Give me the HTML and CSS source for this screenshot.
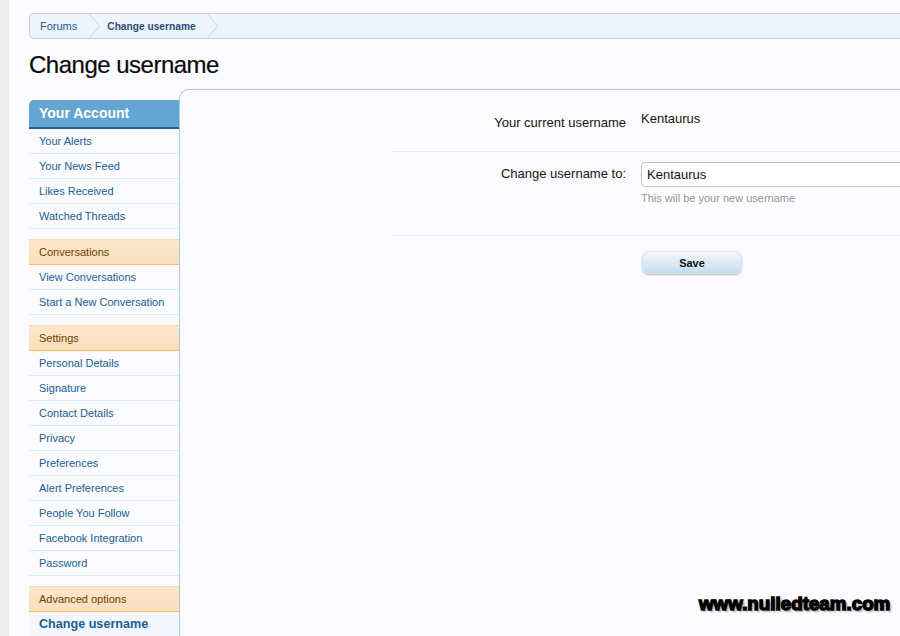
FILE: index.html
```html
<!DOCTYPE html>
<html>
<head>
<meta charset="utf-8">
<title>Change username</title>
<link rel="stylesheet" href="styles.css">
</head>
<body>
<div class="page">
  <nav class="crumbs">
    <a class="crumb" href="#">Forums</a>
    <svg class="chev" width="12" height="26" viewBox="0 0 12 26"><polyline points="0.5,0 11.5,13 0.5,26" fill="none" stroke="#c3d9ec" stroke-width="1"/></svg>
    <a class="crumb current" href="#">Change username</a>
    <svg class="chev" width="12" height="26" viewBox="0 0 12 26"><polyline points="0.5,0 11.5,13 0.5,26" fill="none" stroke="#c3d9ec" stroke-width="1"/></svg>
  </nav>
  <h1 class="title">Change username</h1>
  <div class="layout">
    <aside class="sidebar">
      <div class="side-head">Your Account</div>
      <ul class="side-list">
        <li><a href="#">Your Alerts</a></li>
        <li><a href="#">Your News Feed</a></li>
        <li><a href="#">Likes Received</a></li>
        <li><a href="#">Watched Threads</a></li>
      </ul>
      <div class="side-section">Conversations</div>
      <ul class="side-list">
        <li><a href="#">View Conversations</a></li>
        <li><a href="#">Start a New Conversation</a></li>
      </ul>
      <div class="side-section">Settings</div>
      <ul class="side-list">
        <li><a href="#">Personal Details</a></li>
        <li><a href="#">Signature</a></li>
        <li><a href="#">Contact Details</a></li>
        <li><a href="#">Privacy</a></li>
        <li><a href="#">Preferences</a></li>
        <li><a href="#">Alert Preferences</a></li>
        <li><a href="#">People You Follow</a></li>
        <li><a href="#">Facebook Integration</a></li>
        <li><a href="#">Password</a></li>
      </ul>
      <div class="side-section">Advanced options</div>
      <div class="side-active">Change username</div>
    </aside>
    <main class="panel">
      <form class="form">
        <div class="row row-first">
          <div class="label label-static">Your current username</div>
          <div class="field value">Kentaurus</div>
        </div>
        <div class="row row-second">
          <label class="label label-input">Change username to:</label>
          <div class="field">
            <input class="text-input" type="text" value="Kentaurus">
            <div class="hint">This will be your new username</div>
          </div>
        </div>
        <div class="row row-submit">
          <div class="label"></div>
          <div class="field"><button class="save" type="button">Save</button></div>
        </div>
      </form>
    </main>
  </div>
  <div class="watermark">www.nulledteam.com</div>
</div>
</body>
</html>
```
FILE: styles.css
```css
html, body {
  margin: 0;
  padding: 0;
  overflow: hidden;
}
body {
  background: #efefef;
  font-family: "Liberation Sans", Arial, sans-serif;
  width: 900px;
  height: 636px;
}
a { text-decoration: none; }
.page {
  margin-left: 9px;
  height: 636px;
  background: #fbfbfe;
  padding: 13px 0 0 20px;
  box-sizing: border-box;
  position: relative;
}
.crumbs {
  display: flex;
  align-items: center;
  height: 24px;
  width: 1000px;
  border: 1px solid #b9d3ea;
  border-radius: 5px 0 0 5px;
  background: linear-gradient(#f1f6fc, #eaf2fa);
}
.crumb {
  font-size: 11px;
  color: #1d5b8e;
  line-height: 24px;
  padding: 0 11px 0 10px;
}
.crumb.current {
  font-weight: bold;
  color: #2c4d74;
  font-size: 10.2px;
  line-height: 24px;
  padding: 1px 10px 0 7px;
}
.chev {
  display: block;
  margin-top: -1px;
  margin-bottom: -1px;
  flex: none;
}
.title {
  margin: 8px 0 6px;
  font-size: 24px;
  font-weight: normal;
  letter-spacing: -0.5px;
  line-height: 36px;
  color: #0a0a0a;
  -webkit-text-stroke: 0.2px #0a0a0a;
}
.layout {
  display: flex;
  align-items: flex-start;
}
.sidebar {
  width: 150px;
  flex: none;
  margin-top: 11px;
}
.side-head {
  background: #65a5d1;
  color: #fff;
  font-weight: bold;
  font-size: 14px;
  line-height: 27px;
  padding-left: 10px;
  border-bottom: 2px solid #176093;
  border-radius: 5px 0 0 0;
}
.side-list {
  list-style: none;
  margin: 0 0 10px;
  padding: 0;
}
.side-list li {
  border-bottom: 1px solid #d7edfc;
  line-height: 24px;
  font-size: 11px;
  padding-left: 10px;
}
.side-list a { color: #176093; }
.side-section {
  background: linear-gradient(#fde7cd, #fbdfbd);
  border-top: 1px solid #fcdcb4;
  border-bottom: 1px solid #f9bc6d;
  color: #6d3f03;
  font-size: 11px;
  line-height: 24px;
  padding-left: 10px;
}
.side-active {
  font-size: 12.6px;
  font-weight: bold;
  color: #176093;
  line-height: 25px;
  padding-left: 10px;
  background: #f4f7fc;
}
.panel {
  flex: 1;
  min-width: 0;
  height: 560px;
  border-left: 1px solid #a5cae4;
  border-top: 1px solid #a5cae4;
  border-radius: 10px 0 0 0;
  background: #fcfcff;
}
.form {
  margin-left: 211px;
  width: 700px;
}
.row {
  display: flex;
}
.row-first {
  padding: 20px 0 19px;
  border-bottom: 1px solid #e2ebf5;
}
.row-second {
  padding: 10px 0 30px;
  border-bottom: 1px solid #e2ebf5;
}
.row-submit {
  padding-top: 15px;
}
.label {
  width: 250px;
  flex: none;
  box-sizing: border-box;
  padding-right: 15px;
  text-align: right;
  font-size: 13px;
  line-height: 18px;
  color: #141414;
}
.label-static { padding-top: 4px; }
.label-input { padding-top: 3px; }
.field {
  flex: 1;
  font-size: 13px;
  line-height: 18px;
  color: #141414;
}
.text-input {
  display: block;
  box-sizing: border-box;
  width: 350px;
  height: 25px;
  margin: 0;
  border: 1px solid #c3c3c3;
  border-radius: 4px;
  background: #fff;
  padding: 0 5px;
  font-family: "Liberation Sans", Arial, sans-serif;
  font-size: 13px;
  color: #111;
  outline: none;
}
.hint {
  margin-top: 4px;
  font-size: 11px;
  line-height: 14px;
  color: #969696;
}
.save {
  display: block;
  margin-left: 1px;
  width: 100px;
  height: 23px;
  border: 1px solid #d4e4f0;
  border-radius: 7px;
  background: linear-gradient(#f3f8fc, #c4dced);
  box-shadow: 0 1px 2px rgba(0, 0, 0, 0.28);
  font-family: "Liberation Sans", Arial, sans-serif;
  font-size: 11px;
  font-weight: bold;
  color: #111;
  padding: 0;
}
.watermark {
  position: absolute;
  left: 690px;
  top: 592px;
  font-family: "Liberation Sans", Arial, sans-serif;
  font-weight: bold;
  font-size: 18.8px;
  line-height: 24px;
  color: #000;
  -webkit-text-stroke: 1.4px #000;
  text-shadow: 2px 2px 2px rgba(0, 0, 0, 0.35);
}
```
